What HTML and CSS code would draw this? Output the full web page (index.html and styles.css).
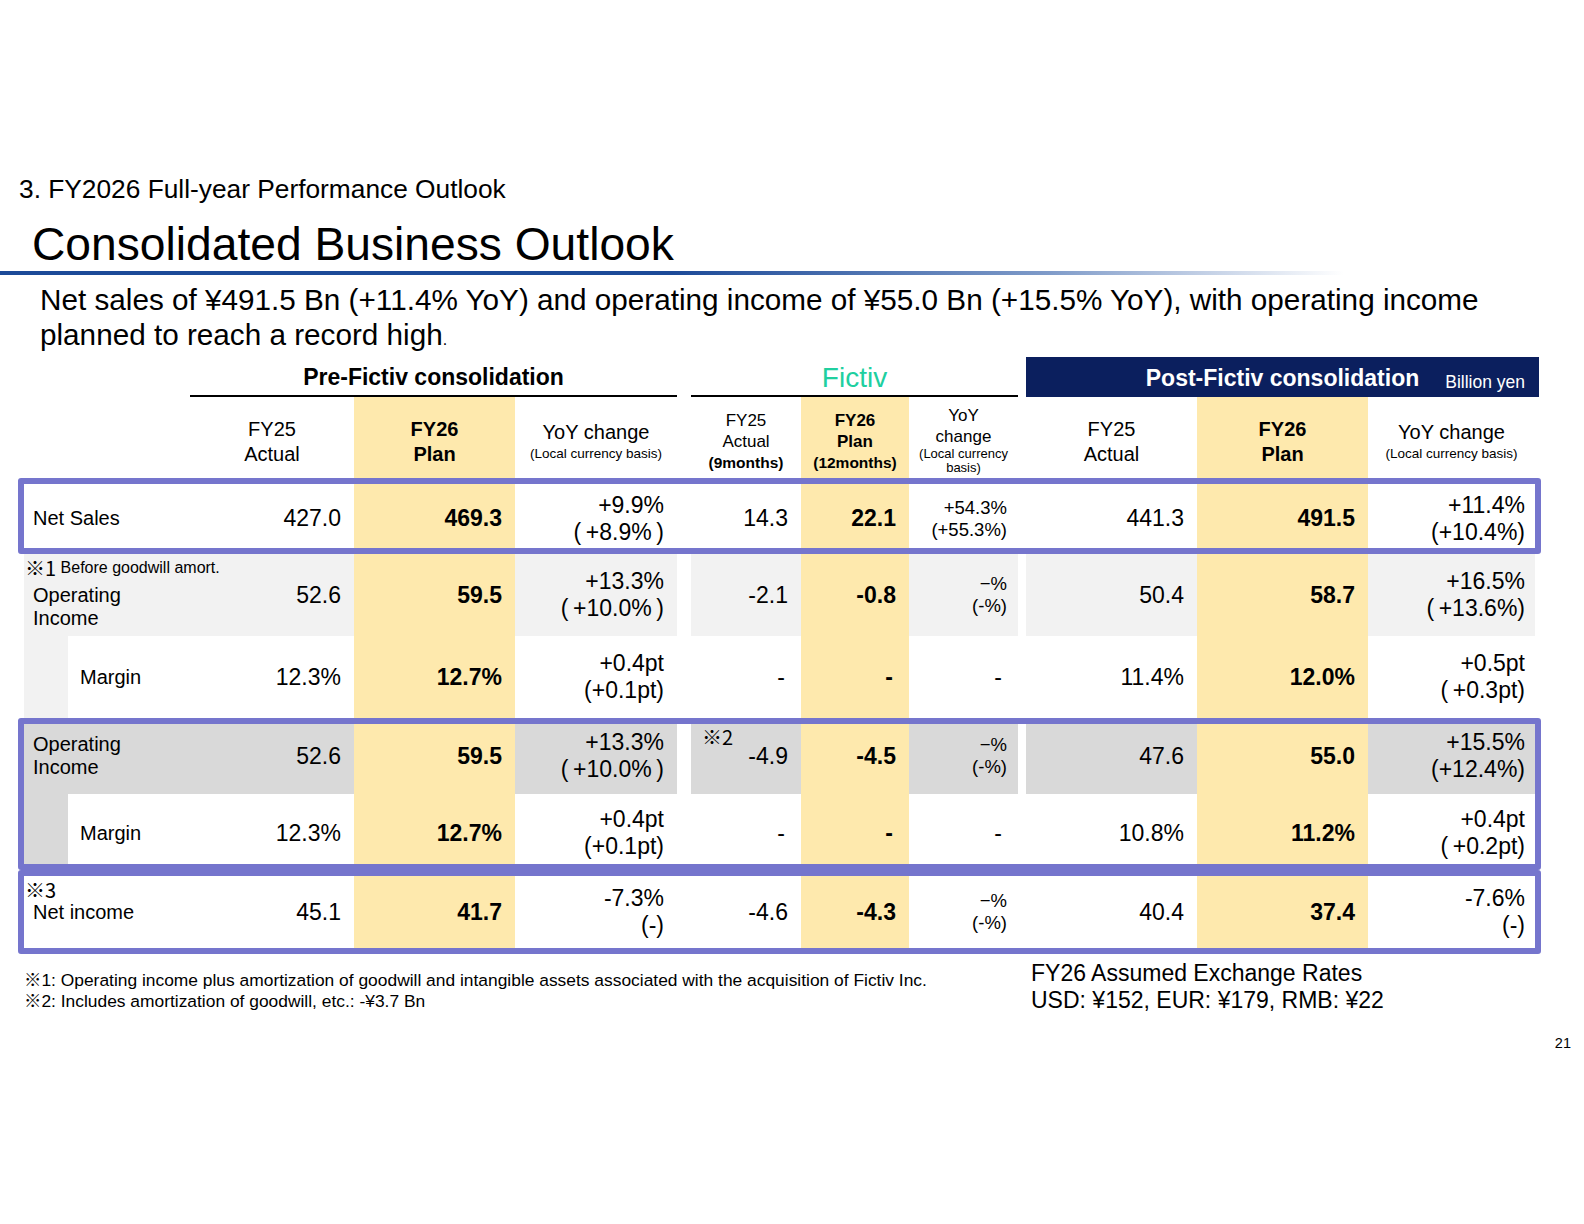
FILE: index.html
```html
<!DOCTYPE html>
<html lang="en">
	<head>
		<meta charset="UTF-8">
		<title>Consolidated Business Outlook</title>
		<link rel="stylesheet" href="styles.css">
	</head>
	<body>
		<div class="slide">
			<div class="section">3. FY2026 Full-year Performance Outlook</div>
			<h1 class="title">Consolidated Business Outlook</h1>
			<div class="rule"></div>
			<p class="lead">Net sales of ¥491.5 Bn (+11.4% YoY) and operating income of ¥55.0 Bn (+15.5% YoY), with operating income<br>planned to reach a record high<span class="dot">.</span></p>

			<div class="table">
				<!-- group titles -->
				<div class="row groups">
					<div class="grp pre">Pre-Fictiv consolidation</div>
					<div class="grp fictiv">Fictiv</div>
					<div class="grp post"><span></span><span>Post-Fictiv consolidation</span><span class="unit">Billion yen</span></div>
				</div>
				<!-- column titles -->
				<div class="row heads">
					<div></div>
					<div class="h">FY25<br>Actual</div>
					<div class="h plan">FY26<br>Plan</div>
					<div class="h">YoY change<small>(Local currency basis)</small></div>
					<div class="h fh f1">FY25<br>Actual<br><b class="sub">(9months)</b></div>
					<div class="h fh plan">FY26<br>Plan<br><span class="sub">(12months)</span></div>
					<div class="h fh yoy">YoY<br>change<small>(Local currency<br>basis)</small></div>
					<div class="h p1">FY25<br>Actual</div>
					<div class="h plan">FY26<br>Plan</div>
					<div class="h">YoY change<small>(Local currency basis)</small></div>
				</div>

				<div class="box">
					<div class="row r-sales">
						<div class="lb">Net Sales</div>
						<div class="n">427.0</div>
						<div class="n plan">469.3</div>
						<div class="y"><span>+9.9%</span><span>(&thinsp;+8.9%&thinsp;)</span></div>
						<div class="n f1">14.3</div>
						<div class="n plan">22.1</div>
						<div class="y sm"><span>+54.3%</span><span>(+55.3%)</span></div>
						<div class="n p1">441.3</div>
						<div class="n plan">491.5</div>
						<div class="y last"><span>+11.4%</span><span>(+10.4%)</span></div>
					</div>
				</div>

				<div class="row r-oi light">
					<div class="lb top"><span class="note"><span class="ref">※1</span> Before goodwill amort.</span><span class="lbl">Operating<br>Income</span></div>
					<div class="n">52.6</div>
					<div class="n plan">59.5</div>
					<div class="y"><span>+13.3%</span><span>(&thinsp;+10.0%&thinsp;)</span></div>
					<div class="n f1">-2.1</div>
					<div class="n plan">-0.8</div>
					<div class="y sm"><span>−%</span><span>(-%)</span></div>
					<div class="n p1">50.4</div>
					<div class="n plan">58.7</div>
					<div class="y last"><span>+16.5%</span><span>(&thinsp;+13.6%)</span></div>
				</div>

				<div class="row r-margin">
					<div class="lb">Margin</div>
					<div class="n">12.3%</div>
					<div class="n plan">12.7%</div>
					<div class="y"><span>+0.4pt</span><span>(+0.1pt)</span></div>
					<div class="n dash f1">-</div>
					<div class="n dash plan">-</div>
					<div class="n dash">-</div>
					<div class="n p1">11.4%</div>
					<div class="n plan">12.0%</div>
					<div class="y last"><span>+0.5pt</span><span>(&thinsp;+0.3pt)</span></div>
				</div>

				<div class="box">
					<div class="row r-oi2 dark">
						<div class="lb">Operating<br>Income</div>
						<div class="n">52.6</div>
						<div class="n plan">59.5</div>
						<div class="y"><span>+13.3%</span><span>(&thinsp;+10.0%&thinsp;)</span></div>
						<div class="n f1 noted"><span class="ref">※2</span><span>-4.9</span></div>
						<div class="n plan">-4.5</div>
						<div class="y sm"><span>−%</span><span>(-%)</span></div>
						<div class="n p1">47.6</div>
						<div class="n plan">55.0</div>
						<div class="y last"><span>+15.5%</span><span>(+12.4%)</span></div>
					</div>
					<div class="row r-margin r-margin2">
						<div class="lb">Margin</div>
						<div class="n">12.3%</div>
						<div class="n plan">12.7%</div>
						<div class="y"><span>+0.4pt</span><span>(+0.1pt)</span></div>
						<div class="n dash f1">-</div>
						<div class="n dash plan">-</div>
						<div class="n dash">-</div>
						<div class="n p1">10.8%</div>
						<div class="n plan">11.2%</div>
						<div class="y last"><span>+0.4pt</span><span>(&thinsp;+0.2pt)</span></div>
					</div>
				</div>

				<div class="box">
					<div class="row r-net">
						<div class="lb top"><span class="ref">※3</span><span>Net income</span></div>
						<div class="n">45.1</div>
						<div class="n plan">41.7</div>
						<div class="y"><span>-7.3%</span><span>(-)</span></div>
						<div class="n f1">-4.6</div>
						<div class="n plan">-4.3</div>
						<div class="y sm"><span>−%</span><span>(-%)</span></div>
						<div class="n p1">40.4</div>
						<div class="n plan">37.4</div>
						<div class="y last"><span>-7.6%</span><span>(-)</span></div>
					</div>
				</div>
			</div>

			<div class="foot">
				<div class="notes">
					<p>※1: Operating income plus amortization of goodwill and intangible assets associated with the acquisition of Fictiv Inc.</p>
					<p>※2: Includes amortization of goodwill, etc.: -¥3.7 Bn</p>
				</div>
				<div class="fx">
					<p>FY26 Assumed Exchange Rates</p>
					<p>USD: ¥152, EUR: ¥179, RMB: ¥22</p>
				</div>
			</div>
			<div class="page">21</div>
		</div>
	</body>
</html>
```

FILE: styles.css
```css
* {
    margin: 0;
    padding: 0;
    box-sizing: border-box;
}
body {
    background: #fff;
    color: #000;
    font-family: "Liberation Sans", Arial, "Noto Sans CJK JP", sans-serif;
}
.slide {
    width: 1584px;
    height: 1224px;
    padding-top: 174px;
    overflow: hidden;
}
.section {
    padding-left: 19px;
    font-size: 26.3px;
    line-height: 30px;
}
.title {
    margin-top: 13px;
    padding-left: 32px;
    font-size: 46.2px;
    font-weight: normal;
    line-height: 54px;
}
.rule {
    width: 1344px;
    height: 4px;
    background: linear-gradient(to right, #1c4a98 0, #1c4a98 50%, #7f9bc9 78%, #fff 100%);
}
.lead {
    margin: 7px 0 0 40px;
    font-size: 29.7px;
    line-height: 35px;
}
.lead .dot {
    font-size: 16px;
    line-height: 1;
}

/* table */
.table {
    margin: 5px 0 0 18px;
    width: 1523px;
}
.row {
    display: grid;
    grid-template-columns: 166px 164px 161px 162px 124px 108px 109px 179px 171px 167px;
    grid-template-rows: 100%;
    border: solid transparent;
    border-width: 0 6px;
}
.box {
    border: 6px solid #7575cd;
    border-radius: 3px;
}
.box .row {
    border-width: 0;
}
.f1 {
    margin-left: 14px;
}
.p1 {
    margin-left: 8px;
}

/* group titles */
.groups {
    height: 40px;
}
.grp {
    display: flex;
    align-items: center;
    justify-content: center;
    padding-top: 3px;
    font-size: 23px;
    font-weight: bold;
}
.pre {
    grid-column: 2 / 5;
    border-bottom: 2px solid #000;
}
.fictiv {
    grid-column: 5 / 8;
    margin-left: 14px;
    border-bottom: 2px solid #000;
    color: #20cf9f;
    font-size: 28px;
    font-weight: normal;
}
.post {
    grid-column: 8 / 11;
    margin-left: 8px;
    margin-right: -4px;
    display: grid;
    grid-template-columns: 1fr auto 1fr;
    align-items: center;
    background: #0b1f5e;
    color: #fff;
}
.post .unit {
    justify-self: end;
    align-self: end;
    padding: 0 14px 4px 0;
    font-size: 17.5px;
    font-weight: normal;
}

/* column titles */
.heads {
    height: 81px;
}
.h {
    display: flex;
    flex-direction: column;
    justify-content: center;
    align-items: center;
    padding-top: 8px;
    text-align: center;
    font-size: 20px;
    line-height: 25px;
}
.h small {
    display: block;
    font-size: 13.5px;
    line-height: 18px;
}
.h.fh {
    padding-top: 8px;
    font-size: 17px;
    line-height: 21px;
}
.h.yoy {
    padding-top: 4px;
}
.h.fh small {
    font-size: 13px;
    line-height: 14px;
}
.h .sub {
    font-size: 15.5px;
    font-weight: bold;
}

/* cells */
.lb {
    z-index: 1;
    display: flex;
    flex-direction: column;
    justify-content: center;
    padding-left: 9px;
    white-space: nowrap;
    font-size: 20px;
    line-height: 23px;
}
.lb.top {
    justify-content: flex-start;
    padding-top: 3px;
}
.ref {
    font-family: "Noto Sans CJK JP", sans-serif;
    font-size: 20px;
    line-height: 22px;
}
.lb .ref {
    margin-left: -8px;
}
.note {
    margin-left: -8px;
    font-size: 16px;
    line-height: 22px;
}
.note .ref {
    margin-left: 0;
    vertical-align: top;
}
.lbl {
    margin-top: 5px;
}
.n {
    display: flex;
    align-items: center;
    justify-content: flex-end;
    padding-right: 13px;
    font-size: 23px;
}
.n.dash {
    padding-right: 16px;
}
.noted {
    justify-content: space-between;
    padding-left: 11px;
}
.noted .ref {
    align-self: flex-start;
    margin-top: 2px;
}
.y {
    display: flex;
    flex-direction: column;
    justify-content: center;
    align-items: flex-end;
    padding-right: 13px;
    font-size: 23px;
    line-height: 27px;
}
.y.sm {
    padding-right: 11px;
    font-size: 18.5px;
    line-height: 22px;
}
.y.last {
    padding-right: 10px;
}
.row .plan {
    background: #fee9ad;
    font-weight: bold;
}

/* rows */
.r-sales {
    height: 64px;
}
.r-sales > div {
    padding-top: 5px;
}
.r-oi {
    height: 82px;
}
.r-margin {
    height: 82px;
}
.r-oi2 {
    height: 70px;
}
.r-oi2 > div {
    padding-bottom: 6px;
}
.r-margin2 {
    height: 70px;
}
.r-margin2 > div {
    padding-top: 8px;
}
.r-net {
    height: 72px;
}
.light > div {
    background: #f2f2f2;
}
.dark > div {
    background: #d9d9d9;
}
.r-margin .lb {
    border-left: 44px solid #f2f2f2;
    padding-left: 12px;
}
.r-margin2 .lb {
    border-left-color: #d9d9d9;
}

/* footer */
.foot {
    display: flex;
    align-items: flex-start;
}
.notes {
    width: 1031px;
    margin-top: 16px;
    padding-left: 24px;
    font-size: 17.4px;
    line-height: 21px;
}
.fx {
    margin-top: 6px;
    font-size: 23px;
    line-height: 27px;
}
.page {
    margin-top: 20px;
    padding-right: 13px;
    text-align: right;
    font-size: 14.5px;
    line-height: 18px;
}
```
